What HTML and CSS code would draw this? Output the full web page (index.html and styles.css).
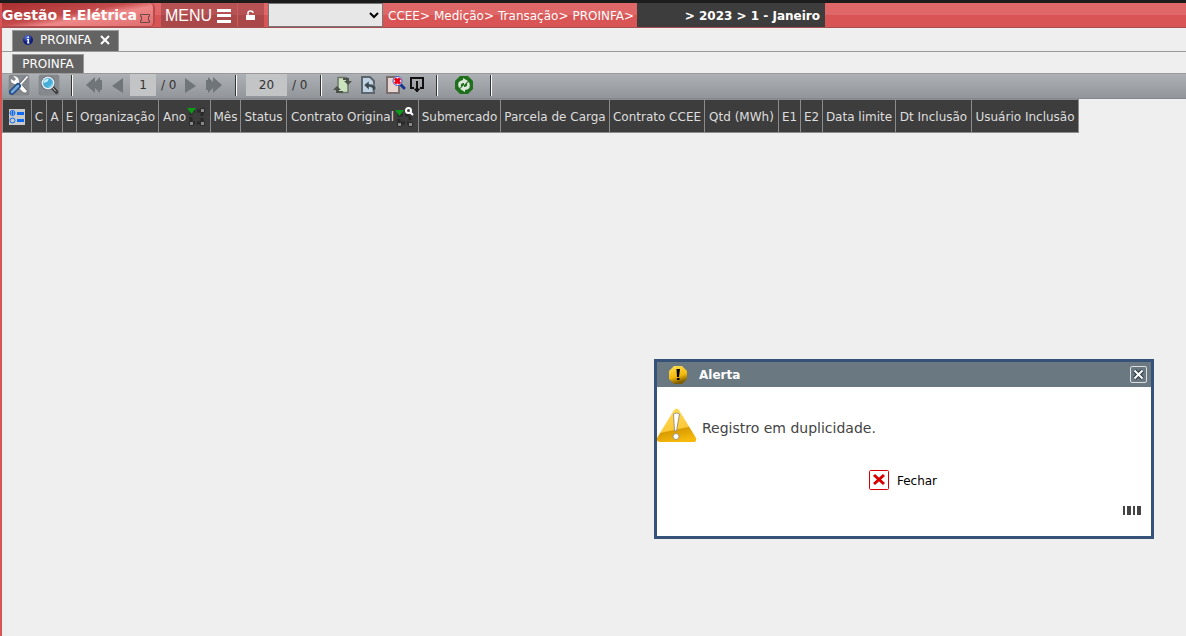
FILE: index.html
```html
<!DOCTYPE html>
<html lang="pt-BR">
<head>
<meta charset="utf-8">
<title>Gestão E.Elétrica</title>
<link rel="stylesheet" href="styles.css">
</head>
<body>
<header class="topbar">
  <div class="brand"><strong>Gestão E.Elétrica</strong>
    <svg class="pin" width="10" height="9" viewBox="0 0 10 9" fill="none" stroke="#70484a"><path d="M.5 2.500V.5h9v2h-1v4h1v2h-9v-2h1v-4z"/></svg>
  </div>
  <button class="menu" type="button">MENU
    <svg width="14" height="14" viewBox="0 0 14 14" fill="#fff"><path d="M0 0h14v3H0zM0 5h14v3H0zM0 11h14v3H0z"/></svg>
  </button>
  <button class="lock" type="button" aria-label="Desbloquear">
    <svg width="9" height="10" viewBox="0 0 9 10"><path d="M2 6V3q0-2 2.500-2T7 3" fill="none" stroke="#fff" stroke-width="1.500"/><path d="M0 5h9v5H0z" fill="#fff"/></svg>
  </button>
  <select class="module" aria-label="Módulo"><option></option></select>
  <nav class="crumbs"><a href="#">CCEE&gt;</a><a href="#">Medição&gt;</a><a href="#">Transação&gt;</a><a href="#">PROINFA&gt;</a></nav>
  <strong class="period">&gt; 2023 &gt; 1 - Janeiro</strong>
</header>
<main class="page">
  <div class="tabs">
    <div class="tab">
      <svg width="10" height="10" viewBox="0 0 10 10"><defs><radialGradient id="info" cx=".4" cy=".25"><stop stop-color="#5f80e0"/><stop offset="1" stop-color="#101f7c"/></radialGradient></defs><circle cx="5" cy="5" r="5" fill="url(#info)"/><path d="M4.500 1.500h1.500V3H4.500zM4 4h2v3.500h.500v1H4v-1h.500V5H4z" fill="#fff"/></svg>
      <span>PROINFA</span>
      <button class="tab-close" type="button" aria-label="Fechar aba"><svg width="10" height="10" viewBox="0 0 10 10" stroke="#fff" stroke-width="2"><path d="M1 1l8 8M9 1L1 9"/></svg></button>
    </div>
  </div>
  <div class="subtabs"><div class="subtab">PROINFA</div></div>
  <div class="toolbar">
    <button class="tool framed" type="button" aria-label="Configurar">
      <svg width="20" height="20" viewBox="0 0 20 20"><path d="M7 7l9 9" stroke="#555" stroke-width="4.500" stroke-linecap="round"/><path d="M4 1l3 3-2 2-3-2Q1 8 6 9l8 8q3 2 4-1L10 7q0-6-6-6z" fill="#fff"/><path d="M18 2l-8 8" stroke="#667" stroke-width="3"/><path d="M18.500 1.500l-8 9" stroke="#fff" stroke-width="1.800"/><path d="M9 11l-6 6" stroke="#234f8b" stroke-width="6" stroke-linecap="round"/><path d="M9 11l-6 6" stroke="#7aa9d8" stroke-width="2.500" stroke-linecap="round"/></svg>
    </button>
    <button class="tool framed second" type="button" aria-label="Pesquisar">
      <svg width="20" height="20" viewBox="0 0 20 20"><path d="M13 12l4.500 5" stroke="#333" stroke-width="3.500" stroke-linecap="round"/><path d="M13 12l4 4.500" stroke="#d8d8d8"/><circle cx="9" cy="8" r="7" fill="#556"/><circle cx="9" cy="8" r="6.500" fill="#e4f0f4"/><circle cx="9" cy="8" r="5" fill="#45add8"/><path d="M4.500 8q0-4 5-4.500Q10 7 4.500 8" fill="#c7effc"/><path d="M8 12q5-1 5-5 2 5-5 5" fill="#8fe0f5"/></svg>
    </button>
    <span class="rule"></span>
    <button class="tool first" type="button" aria-label="Primeira"><svg width="17" height="16" viewBox="0 0 17 16" fill="#70757a"><path d="M9 0v5l5-5v3h2v10h-2v3l-5-5v5L0 8z"/></svg></button>
    <button class="tool prev" type="button" aria-label="Anterior"><svg width="11" height="15" viewBox="0 0 11 15" fill="#70757a"><path d="M11 0v15L0 8z"/></svg></button>
    <input class="page-no" value="1" aria-label="Página">
    <span class="total">/ 0</span>
    <button class="tool next" type="button" aria-label="Próxima"><svg width="11" height="15" viewBox="0 0 11 15" fill="#70757a"><path d="M0 0v15l11-7z"/></svg></button>
    <button class="tool last" type="button" aria-label="Última"><svg width="17" height="16" viewBox="0 0 17 16" fill="#70757a"><path d="M8 0v5L3 0v3H1v10h2v3l5-5v5l9-8z"/></svg></button>
    <span class="rule after-last"></span>
    <input class="page-size" value="20" aria-label="Registros por página">
    <span class="total">/ 0</span>
    <span class="rule after-size"></span>
    <button class="tool reload" type="button" aria-label="Recarregar"><svg width="20" height="18" viewBox="0 0 20 18"><path d="M5 1.500h7q3 0 3 3v12H8q-3 0-3-3z" fill="#cae2bd" stroke="#6d756a" stroke-width="1.500"/><path d="M10 2h6v3h3l-4 4-4-4h2V4h-3zM10 17H3v-3H0l4-4 4 4H6v1h4z" fill="#4d514b"/></svg></button>
    <button class="tool undo" type="button" aria-label="Desfazer"><svg width="17" height="18" viewBox="0 0 17 18"><path d="M2 1h8l4 4v12H2z" fill="#bed2e4" stroke="#5d656c" stroke-width="2"/><path d="M4 9l5-4v3q7 0 7 4 0 3-4 4 2-5-3-5v3z" fill="#3f4b53" stroke="#dbe6ee" stroke-width=".4"/></svg></button>
    <button class="tool clear" type="button" aria-label="Limpar filtro"><svg width="21" height="18" viewBox="0 0 21 18"><path d="M2 1h10l2 3v13H2z" fill="#e7d5d2" stroke="#7b6e6e" stroke-width="2"/><path d="M15 8l4 4" stroke="#17358e" stroke-width="3" stroke-linecap="round"/><circle cx="12.500" cy="5" r="4.500" fill="#f6e6f0" stroke="#3d5bc7"/><path d="M10 2.500l5 5M15 2.500l-5 5" stroke="#f00018" stroke-width="3"/></svg></button>
    <button class="tool export" type="button" aria-label="Exportar"><svg width="14" height="16" viewBox="0 0 14 16" fill="none" stroke="#111" stroke-width="2"><path d="M4 11H1V1h12v10h-3M7 4v9"/><path d="M4.500 12h5L7 15z" fill="#111" stroke-width="1"/></svg></button>
    <span class="rule after-export"></span>
    <button class="tool refresh" type="button" aria-label="Atualizar"><svg width="18" height="18" viewBox="0 0 18 18"><path d="M5 0h8l5 5v8l-5 5H5l-5-5V5z" fill="#1e701c"/><path d="M4 12Q1 5 8 4V2l5 3-4 4V7q-4 0-3 4zM14 6q3 7-4 8v2l-5-3 4-4v2q4 0 3-4z" fill="#dce8da"/></svg></button>
    <span class="rule after-refresh"></span>
  </div>
  <table class="grid">
    <thead><tr>
      <th class="w-menu"><svg width="16" height="16" viewBox="0 0 16 16"><path d="M0 0h16v16H0z" fill="#c9c9c9"/><g fill="none" stroke="#0b69f5"><circle cx="3.500" cy="4" r="2.500"/><path d="M1 4h5M3.500 1.500v5"/><circle cx="3.500" cy="11.500" r="2.500"/></g><path d="M8 3h7v3H8zM8 10h7v3H8z" fill="#0b69f5"/></svg></th>
      <th class="w-c">C</th><th class="w-a">A</th><th class="w-e">E</th>
      <th class="w-org">Organização</th>
      <th class="w-year"><span class="filtered">Ano<svg width="20" height="20" viewBox="0 0 20 20"><path d="M5 4h11v12H5z" fill="none" stroke="#292929" stroke-width="3" stroke-dasharray="4 2"/><path d="M1 1h9L5.500 7z" fill="#0b9b19"/><path d="M14.500 1.500h4v4h-4zM3.500 14.500h4v4h-4zM14.500 14.500h4v4h-4z" fill="#8a8a8a" stroke="#2a2a2a"/></svg></span></th>
      <th class="w-month">Mês</th><th class="w-status">Status</th>
      <th class="w-contract"><span class="filtered">Contrato Original<svg width="20" height="20" viewBox="0 0 20 20"><path d="M5 8h11v8H5z" fill="none" stroke="#292929" stroke-width="3" stroke-dasharray="4 2"/><path d="M1 3h9L5.500 9z" fill="#0b9b19"/><path d="M3.500 15.500h4v4h-4zM14.500 15.500h4v4h-4z" fill="#8a8a8a" stroke="#2a2a2a"/><circle cx="14.500" cy="3.500" r="2.500" fill="none" stroke="#fff" stroke-width="2"/><path d="M16 5l3 3" stroke="#fff" stroke-width="2"/></svg></span></th>
      <th class="w-sub">Submercado</th><th class="w-load">Parcela de Carga</th><th class="w-ccee">Contrato CCEE</th>
      <th class="w-qty">Qtd (MWh)</th><th class="w-flag">E1</th><th class="w-flag">E2</th>
      <th class="w-limit">Data limite</th><th class="w-date">Dt Inclusão</th><th class="w-user">Usuário Inclusão</th>
    </tr></thead>
  </table>
</main>
<section class="dialog" role="alertdialog" aria-labelledby="alert-title" aria-describedby="alert-text">
  <header class="dialog-head">
    <svg width="18" height="18" viewBox="0 0 18 18"><defs><linearGradient id="gold" x2=".3" y2="1"><stop stop-color="#ffe15a"/><stop offset=".65" stop-color="#f3b909"/><stop offset="1" stop-color="#7f5c00"/></linearGradient></defs><path d="M5 0h8l5 5v8l-5 5H5l-5-5V5z" fill="url(#gold)"/><path d="M7.500 3h3.500l-1 8H8zM8 12h2.500v2H8z" fill="#000"/></svg>
    <h2 id="alert-title">Alerta</h2>
    <button class="dialog-x" type="button" aria-label="Fechar alerta"><svg width="11" height="11" viewBox="0 0 11 11"><path d="M1.500 1.500l8 8M9.500 1.500l-8 8" stroke="#273541" stroke-width="4"/><path d="M1.500 1.500l8 8M9.500 1.500l-8 8" stroke="#fff" stroke-width="2"/></svg></button>
  </header>
  <div class="message">
    <svg width="40" height="34" viewBox="0 0 40 34"><defs><linearGradient id="warn" x1=".2" x2=".45" y2="1"><stop stop-color="#ffdc58"/><stop offset=".64" stop-color="#fcc93a"/><stop offset=".68" stop-color="#d99c00"/><stop offset="1" stop-color="#f5b90c"/></linearGradient></defs><path d="M17 2q2.500-3 5 0l17 28q1 4-3 4H3q-4 0-3-4z" fill="url(#warn)"/><path d="M16.500 6q3-2 6 0l-3 17h-2z" fill="#fff" stroke="#8b8078" stroke-width=".8"/><circle cx="19" cy="28.500" r="3" fill="#fff" stroke="#8b8078" stroke-width=".8"/></svg>
    <p id="alert-text">Registro em duplicidade.</p>
  </div>
  <button class="close" type="button"><svg width="20" height="20" viewBox="0 0 20 20"><rect x=".5" y=".5" width="19" height="19" rx="1" fill="#fff" stroke="#d60000"/><path d="M5 5l10 9M15 5L5 14" stroke="#d60000" stroke-width="3"/></svg><span>Fechar</span></button>
  <svg class="bars" width="18" height="9" viewBox="0 0 18 9" fill="#444"><path d="M0 0h2v9H0zM4 0h4v9H4zM10 0h2v9h-2zM14 0h4v9h-4z"/></svg>
</section>
</body>
</html>
```
FILE: styles.css
```css
* { box-sizing: border-box; }
body {
  margin: 0;
  min-height: 100vh;
  display: flex;
  flex-direction: column;
  background: #efefef;
  border-top: 3px solid #1c1c1c;
  font: 12px/16px Tahoma, "DejaVu Sans", sans-serif;
  color: #333;
}
button { border: 0; padding: 0; background: none; font: inherit; color: inherit; }
svg { display: block; flex: none; }
.topbar {
  display: flex;
  height: 25px;
  border-left: 2px solid #da5456;
  border-bottom: 1px solid #a94e4e;
  background: linear-gradient(#e06767 50%, #d95555 50%);
  color: #fff;
}
.brand {
  display: flex;
  align-items: center;
  width: 153px;
  padding-top: 1px;
  border: solid #b84b4d;
  border-width: 0 2px 1px 0;
  border-radius: 0 5px 5px 0;
  background: linear-gradient(170deg, #a52e2e, #c44a4b 45%, #e88 60%, #e06d6d);
  font-family: Verdana, "DejaVu Sans", sans-serif;
  font-size: 14px;
  white-space: nowrap;
}
.pin { margin: 7px 0 0 3px; }
.menu {
  display: flex;
  align-items: center;
  gap: 5px;
  margin-left: 6px;
  width: 76px;
  padding: 2px 0 0 4px;
  background: linear-gradient(#b75254 50%, #aa4849 50%);
  font: 16px/22px "Liberation Sans", Arial, sans-serif;
}
.lock {
  width: 27px;
  padding-right: 1px;
  border-left: 1px solid #ca5c5d;
  background: linear-gradient(#b75254 50%, #aa4849 50%);
}
.lock svg { margin: 0 auto; }
.module {
  width: 115px;
  margin-left: 4px;
  border: 1px solid #777;
  border-radius: 0;
  background: #e7e7e7;
}
.crumbs { display: flex; gap: 4px; align-items: center; width: 254px; padding: 1px 0 0 5px; white-space: nowrap; }
.crumbs a { color: #fff; text-decoration: none; }
.period { width: 188px; padding-right: 5px; background: #3d3d3d; line-height: 26px; text-align: right; white-space: nowrap; }
.page { flex: 1; border-left: 2px solid #da5456; }
.tabs { height: 24px; padding: 2px 10px 0; border-bottom: 1px solid #999; }
.tab {
  display: flex;
  align-items: center;
  gap: 7px;
  width: 107px;
  height: 21px;
  padding: 0 8px 3px 10px;
  border: 1px solid #999;
  border-bottom: 0;
  background: #636363;
  color: #fff;
}
.tab-close { margin-left: auto; }
.subtabs { padding: 2px 10px 0; border-bottom: 1px solid #999; }
.subtab { width: 72px; height: 19px; border: 1px solid #999; border-bottom: 0; background: #636363; color: #fff; line-height: 18px; text-align: center; }
.toolbar { display: flex; align-items: center; height: 25px; padding: 0 0 2px 7px; background: linear-gradient(#adb1b5, #92969a); border-bottom: 1px solid #85898d; }
.framed { border-radius: 3px; background: #85898d; box-shadow: 0 0 1px #444; }
.second { margin-left: 10px; }
.rule { width: 2px; height: 21px; margin-left: 12px; border-left: 1px solid #333; border-right: 1px solid #fff; }
.first { margin-left: 13px; }
.prev { margin-left: 9px; }
.page-no, .page-size { height: 22px; padding: 0; border: 0; background: #c2c4c5; color: #333; text-align: center; font: inherit; }
.page-no { width: 26px; margin-left: 7px; }
.page-size { width: 41px; margin-left: 9px; }
.total { width: 19px; margin-left: 5px; white-space: nowrap; }
.next { margin-left: 5px; }
.last { margin-left: 9px; }
.after-last { margin-left: 13px; }
.after-size { margin-left: 9px; }
.reload { margin-left: 11px; }
.undo { margin-left: 7px; }
.clear { margin-left: 8px; }
.export { margin-left: 4px; }
.after-export { margin-left: 12px; }
.refresh { margin-left: 17px; }
.after-refresh { margin-left: 17px; }
.grid { border-collapse: collapse; table-layout: fixed; width: 1077px; }
.grid th { height: 33px; padding: 1px 0 0; border: 1px solid #8c8c8c; background: #3d3d3d; color: #ddd; font-weight: 400; text-align: center; white-space: nowrap; }
.w-menu svg { margin: 0 auto; }
.filtered { display: flex; align-items: center; justify-content: center; height: 20px; }
.w-menu { width: 29px; }
.w-c { width: 15px; }
.w-a { width: 16px; }
.w-e { width: 14px; }
.w-org { width: 82px; }
.w-year { width: 52px; }
.w-month { width: 30px; }
.w-status { width: 46px; }
.w-contract { width: 132px; }
.w-sub { width: 82px; }
.w-load { width: 109px; }
.w-ccee { width: 95px; }
.w-qty { width: 74px; }
.w-flag { width: 22px; }
.w-limit { width: 73px; }
.w-date { width: 76px; }
.w-user { width: 107px; }
.dialog {
  position: absolute;
  top: 359px;
  right: 32px;
  display: flex;
  flex-direction: column;
  width: 500px;
  padding-bottom: 21px;
  border: 3px solid #365278;
  background: #fff;
}
.dialog-head { display: flex; align-items: center; height: 25px; padding: 0 4px 0 12px; background: #6a7981; color: #fff; }
.dialog-head h2 { margin: 0 auto 0 12px; font-size: 12px; }
.dialog-x { display: grid; place-content: center; width: 17px; height: 17px; border: 1px solid #ddd; border-radius: 2px; }
.message { display: flex; align-items: center; gap: 5px; margin-top: 21px; font: 14px/20px Verdana, "DejaVu Sans", sans-serif; color: #444; }
.message p { margin: 5px 0 0; }
.close { display: flex; align-items: center; gap: 8px; align-self: center; margin: 28px 2px 16px 0; color: #000; }
.close span { padding-top: 2px; }
.bars { align-self: flex-end; margin-right: 10px; }
```
